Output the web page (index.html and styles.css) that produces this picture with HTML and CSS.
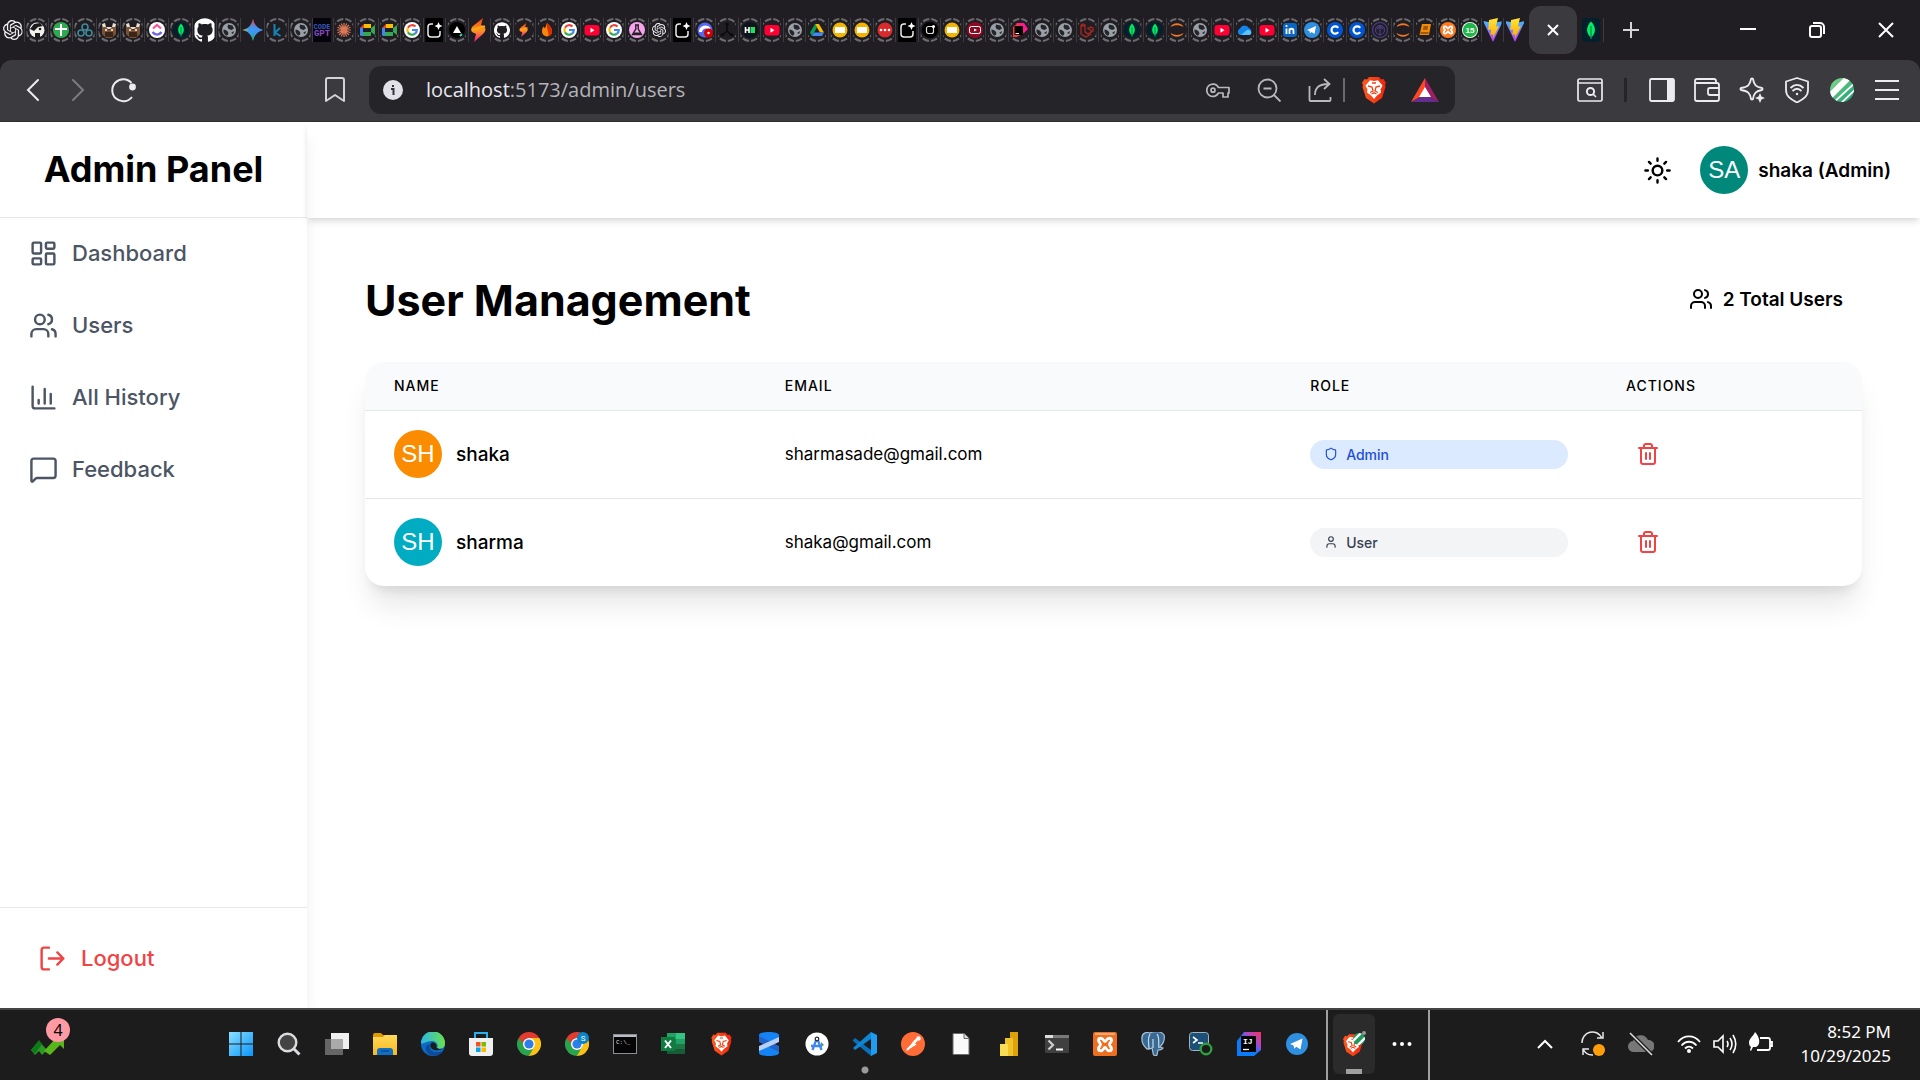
FILE: index.html
```html
<!DOCTYPE html>
<html lang="en">
<head>
<meta charset="utf-8">
<meta name="viewport" content="width=device-width, initial-scale=1">
<title>Admin Panel</title>
<link rel="stylesheet" href="styles.css">
</head>
<body>
<svg class="sprite" aria-hidden="true">
  <defs>
    <linearGradient id="gem" x1="0" x2="1"><stop offset="0" stop-color="#f5c518"/><stop offset=".3" stop-color="#34a0f0"/><stop offset="1" stop-color="#4a8cf7"/></linearGradient>
    <linearGradient id="gemv" x1="0" y1="0" x2="0" y2="1"><stop offset=".1" stop-color="#f0473a"/><stop offset=".5" stop-color="#4a8cf7" stop-opacity="0"/><stop offset=".55" stop-color="#4a8cf7" stop-opacity="0"/><stop offset=".9" stop-color="#20b053"/></linearGradient>
    <linearGradient id="hot" x1="0" y1="0" x2="0" y2="1"><stop offset="0" stop-color="#f23a18"/><stop offset=".5" stop-color="#ff9a1a"/><stop offset="1" stop-color="#f0188c"/></linearGradient>
    <linearGradient id="vblue" x1="0" y1="0" x2="0" y2="1"><stop offset="0" stop-color="#41b8ff"/><stop offset="1" stop-color="#c035ff"/></linearGradient>
    <linearGradient id="vyel" x1="0" y1="0" x2="0" y2="1"><stop offset="0" stop-color="#ffe53b"/><stop offset="1" stop-color="#ffa800"/></linearGradient>
    <linearGradient id="win" x1="0" y1="0" x2="1" y2="1"><stop offset="0" stop-color="#8be0ff"/><stop offset="1" stop-color="#0a94fb"/></linearGradient>
    <linearGradient id="fold" x1="0" y1="0" x2="0" y2="1"><stop offset="0" stop-color="#ffd95a"/><stop offset="1" stop-color="#f7b81d"/></linearGradient>
    <linearGradient id="edge" x1="0" y1="0" x2="1" y2="0"><stop offset="0" stop-color="#2bb5ea"/><stop offset="1" stop-color="#6be04b"/></linearGradient>
    <linearGradient id="brv" x1="0" x2="1"><stop offset="0" stop-color="#ff5a1f"/><stop offset="1" stop-color="#f0250c"/></linearGradient>
    <linearGradient id="jb" x1="0" y1="1" x2="1" y2="0"><stop offset="0" stop-color="#087cfa"/><stop offset=".5" stop-color="#087cfa"/><stop offset=".65" stop-color="#a04ad0"/><stop offset="1" stop-color="#fe315d"/></linearGradient>
    <linearGradient id="green" x1="0" y1="0" x2="1" y2="1"><stop offset="0" stop-color="#8fd98c"/><stop offset="1" stop-color="#0a9a72"/></linearGradient>
  </defs>
  <symbol id="ring" viewBox="0 0 24 24"><circle cx="12" cy="12" r="11" fill="none" stroke="#6c6c70" stroke-width="2" stroke-dasharray="6.6 2.04" stroke-dashoffset="-1"/></symbol>
  <symbol id="gpt" viewBox="0 0 24 24"><path fill="#f4f4f5" d="M22.2819 9.8211a5.9847 5.9847 0 0 0-.5157-4.9108 6.0462 6.0462 0 0 0-6.5098-2.9A6.0651 6.0651 0 0 0 4.9807 4.1818a5.9847 5.9847 0 0 0-3.9977 2.9 6.0462 6.0462 0 0 0 .7427 7.0966 5.98 5.98 0 0 0 .511 4.9107 6.051 6.051 0 0 0 6.5146 2.9001A5.9847 5.9847 0 0 0 13.2599 24a6.0557 6.0557 0 0 0 5.7718-4.2058 5.9894 5.9894 0 0 0 3.9977-2.9001 6.0557 6.0557 0 0 0-.7475-7.0729zm-9.022 12.6081a4.4755 4.4755 0 0 1-2.8764-1.0408l.1419-.0804 4.7783-2.7582a.7948.7948 0 0 0 .3927-.6813v-6.7369l2.02 1.1686a.071.071 0 0 1 .038.052v5.5826a4.504 4.504 0 0 1-4.4945 4.4944zm-9.6607-4.1254a4.4708 4.4708 0 0 1-.5346-3.0137l.142.0852 4.783 2.7582a.7712.7712 0 0 0 .7806 0l5.8428-3.3685v2.3324a.0804.0804 0 0 1-.0332.0615L9.74 19.9502a4.4992 4.4992 0 0 1-6.1408-1.6464zM2.3408 7.8956a4.485 4.485 0 0 1 2.3655-1.9728V11.6a.7664.7664 0 0 0 .3879.6765l5.8144 3.3543-2.0201 1.1685a.0757.0757 0 0 1-.071 0l-4.8303-2.7865A4.504 4.504 0 0 1 2.3408 7.872zm16.5963 3.8558L13.1038 8.364 15.1192 7.2a.0757.0757 0 0 1 .071 0l4.8303 2.7913a4.4944 4.4944 0 0 1-.6765 8.1042v-5.6772a.79.79 0 0 0-.407-.667zm2.0107-3.0231l-.142-.0852-4.7735-2.7818a.7759.7759 0 0 0-.7854 0L9.409 9.2297V6.8974a.0662.0662 0 0 1 .0284-.0615l4.8303-2.7866a4.4992 4.4992 0 0 1 6.6802 4.66zM8.3065 12.863l-2.02-1.1638a.0804.0804 0 0 1-.038-.0567V6.0742a4.4992 4.4992 0 0 1 7.3757-3.4537l-.142.0805L8.704 5.459a.7948.7948 0 0 0-.3927.6813zm1.0976-2.3654l2.602-1.4998 2.6069 1.4998v2.9994l-2.5974 1.4997-2.6067-1.4997Z"/></symbol>
  <symbol id="github" viewBox="0 0 24 24"><path fill="#fff" d="M12 .297c-6.63 0-12 5.373-12 12 0 5.303 3.438 9.8 8.205 11.385.6.113.82-.258.82-.577 0-.285-.01-1.04-.015-2.04-3.338.724-4.042-1.61-4.042-1.61C4.422 18.07 3.633 17.7 3.633 17.7c-1.087-.744.084-.729.084-.729 1.205.084 1.838 1.236 1.838 1.236 1.07 1.835 2.809 1.305 3.495.998.108-.776.417-1.305.76-1.605-2.665-.3-5.466-1.332-5.466-5.93 0-1.31.465-2.38 1.235-3.22-.135-.303-.54-1.523.105-3.176 0 0 1.005-.322 3.3 1.23.96-.267 1.98-.399 3-.405 1.02.006 2.04.138 3 .405 2.28-1.552 3.285-1.23 3.285-1.23.645 1.653.24 2.873.12 3.176.765.84 1.23 1.91 1.23 3.22 0 4.61-2.805 5.625-5.475 5.92.42.36.81 1.096.81 2.22 0 1.606-.015 2.896-.015 3.286 0 .315.21.69.825.57C20.565 22.092 24 17.592 24 12.297c0-6.627-5.373-12-12-12"/></symbol>
  <symbol id="github-s" viewBox="0 0 24 24"><use href="#github" x="4" y="4" width="16" height="16"/></symbol>
  <symbol id="gpt-s" viewBox="0 0 24 24"><use href="#gpt" x="5" y="5" width="14" height="14"/></symbol>
  <symbol id="husky" viewBox="0 0 24 24"><circle cx="12" cy="12" r="7.5" fill="#f3f1ee"/><path d="M5 11l4-5 6-1 3 3-5 1-4 4zM10 15h5v5h-5z" fill="#1c1a1a"/><circle cx="15" cy="11" r="1.3" fill="#1c1a1a"/></symbol>
  <symbol id="sheet" viewBox="0 0 24 24"><circle cx="12" cy="12" r="8" fill="#2ea94f"/><path d="M12 6v12M6 11h12" stroke="#fff" stroke-width="2"/></symbol>
  <symbol id="loops" viewBox="0 0 24 24"><g fill="none" stroke="#3f8a9c" stroke-width="1.6"><circle cx="12" cy="9" r="3"/><circle cx="8" cy="15" r="3"/><circle cx="16" cy="15" r="3"/></g></symbol>
  <symbol id="bear" viewBox="0 0 24 24"><path d="M5 6l3-1 1 4h6l1-4 3 1-1 5H6z" fill="#e8dfd2"/><path d="M5 9h4l3 3 3-3h4v7l-4 4H9l-4-4z" fill="#7a5236"/><path d="M8 14h8v5H8z" fill="#3a251a"/><circle cx="9" cy="12" r="1" fill="#fff"/><circle cx="15" cy="12" r="1" fill="#fff"/></symbol>
  <symbol id="clickup" viewBox="0 0 24 24"><circle cx="12" cy="12" r="8" fill="#fff"/><path d="M8 10.500l4-3.500 4 3.500" fill="none" stroke="#f5539a" stroke-width="2.200"/><path d="M7.500 14c2.500 3.500 6.500 3.500 9 0" fill="none" stroke="#6a63f0" stroke-width="2.300"/></symbol>
  <symbol id="mongo" viewBox="0 0 24 24"><circle cx="12" cy="12" r="8" fill="#04202c"/><path d="M12 5.500c4 4.500 3.500 9 0 12-3.500-3-4-7.500 0-12z" fill="#00ed64"/><path d="M12 9v10" stroke="#0a8a45"/></symbol>
  <symbol id="mongo-l" viewBox="0 0 24 24"><rect x="3" width="18" height="24" rx="4" fill="#04202c"/><path d="M12 3.500c5.500 5.500 5 12 0 16-5-4-5.500-10.500 0-16z" fill="#00ed64"/><path d="M12 8v13" stroke="#0a8a45" stroke-width="1.300"/></symbol>
  <symbol id="globe" viewBox="0 0 24 24"><circle cx="12" cy="12" r="7" fill="#9aa0a8"/><path d="M6.500 11.500c2 .3 3.500 1 4.500 2.500s0 3.500-1.500 3.700C7 16.500 6 14 6.500 11.500zM11 6.500l4.500 1 1.500 3-2.500 1.500-3-1-1-2zM14 15l3-2-.8 3z" fill="#26252a"/></symbol>
  <symbol id="gemini" viewBox="0 0 24 24"><path d="M12 1c1 6 5 10 11 11-6 1-10 5-11 11-1-6-5-10-11-11 6-1 10-5 11-11z" fill="url(#gem)"/><path d="M12 1c1 6 5 10 11 11-6 1-10 5-11 11-1-6-5-10-11-11 6-1 10-5 11-11z" fill="url(#gemv)"/></symbol>
  <symbol id="kag" viewBox="0 0 24 24"><path d="M9.500 6v12M15 10l-5 4.500 5.500 3.500" fill="none" stroke="#1486b4" stroke-width="2"/></symbol>
  <symbol id="claude" viewBox="0 0 24 24"><path d="M12 5v14M5 12h14M7 7l10 10M17 7L7 17M9.300 5.500l5.400 13M14.700 5.500l-5.400 13M5.500 9.300l13 5.400M5.500 14.700l13-5.400" stroke="#d97757" stroke-width="1.200"/></symbol>
  <symbol id="meet" viewBox="0 0 24 24"><path d="M5 10l4-4v4z" fill="#ea4335"/><path d="M9 6h7v4H9z" fill="#fbbc04"/><path d="M5 10h3v8H6l-1-1z" fill="#4285f4"/><path d="M8 14h8v4H8zM16 10l4-3v10l-4-3z" fill="#34a853"/></symbol>
  <symbol id="google" viewBox="0 0 24 24"><circle cx="12" cy="12" r="8" fill="#fff"/><g fill="none" stroke-width="2.200"><path d="M15.500 8.600A4.700 4.700 0 0 0 8 9.700" stroke="#ea4335"/><path d="M8 9.700a4.700 4.700 0 0 0 0 4.700" stroke="#fbbc04"/><path d="M8 14.400a4.700 4.700 0 0 0 7 1.300" stroke="#34a853"/><path d="M12 12h4.800a4.600 4.600 0 0 1-1.800 3.700" stroke="#4285f4"/></g></symbol>
  <symbol id="spark" viewBox="0 0 24 24"><path d="M3 0h18v24H3z" fill="#000"/><path d="M11 6H9a3 3 0 0 0-3 3v7a3 3 0 0 0 3 3h6a3 3 0 0 0 3-3v-3" fill="none" stroke="#ededed" stroke-width="1.500"/><path d="M16.500 4l1.200 2.800 2.800 1.200-2.800 1.200-1.200 2.800-1.200-2.800L12.500 8l2.800-1.200z" fill="#fff"/></symbol>
  <symbol id="spark-s" viewBox="0 0 24 24"><circle cx="12" cy="12" r="8" fill="#000"/><rect x="8.500" y="8.500" width="7" height="7" rx="2" fill="none" stroke="#ddd" stroke-width="1.200"/><circle cx="15.500" cy="8.500" r="1.500" fill="#fff"/></symbol>
  <symbol id="vercel" viewBox="0 0 24 24"><circle cx="12" cy="12" r="8" fill="#000"/><path d="M12 8l4 7H8z" fill="#fff"/><path d="M15 18l2-2" stroke="#35d6c0" stroke-width="2"/></symbol>
  <symbol id="scribe" viewBox="0 0 24 24"><path d="M16 0L6 8c-3 3-2 6 1 7l2 1-2 8 9-8c4-4 3-8-2-9z" fill="url(#hot)"/><path d="M5 12l13-4" stroke="#ffb01a" stroke-width="1.500"/></symbol>
  <symbol id="scribe-s" viewBox="0 0 24 24"><use href="#scribe" x="5" y="5" width="14" height="14"/></symbol>
  <symbol id="fire" viewBox="0 0 24 24"><path d="M12 5c3 3 5 5 5 8.500a5 5 0 0 1-10 0c0-2 .5-3.500 1.500-5l1.500 2z" fill="#f8860b"/><path d="M12 5c3 3 5 5 5 8.500a5 5 0 0 1-4 4.800c2-4-2-6-1-13.300z" fill="#dd2c00"/></symbol>
  <symbol id="youtube" viewBox="0 0 24 24"><rect x="4.500" y="7" width="15" height="10.500" rx="3" fill="#ff0033"/><path d="M10.500 9.700l4 2.500-4 2.500z" fill="#fff"/></symbol>
  <symbol id="labs" viewBox="0 0 24 24"><circle cx="12" cy="12" r="8" fill="#f5a3ec"/><path d="M10 7h4M10.800 7v4L7.500 16.500h9L13.200 11V7" fill="none" stroke="#222" stroke-width="1.400"/><path d="M9 14.500h6l1.500 2.500h-9z" fill="#222"/></symbol>
  <symbol id="copilot" viewBox="0 0 24 24"><circle cx="12" cy="12" r="7.500" fill="#5468f0"/><path d="M7.500 14a5 5 0 0 1 9-3" stroke="#fff" stroke-width="3" fill="none"/><circle cx="15.500" cy="15" r="4.500" fill="#d50000"/><circle cx="15.500" cy="15" r="1.200" fill="#fff"/></symbol>
  <symbol id="tri" viewBox="0 0 24 24"><path d="M12 6v7l-5 4.500M12 13l5 4.500" stroke="#0a0a0c" stroke-width="1.600" fill="none"/><circle cx="12" cy="6" r="1.600" fill="#0a0a0c"/><circle cx="7" cy="17" r="1.600" fill="#0a0a0c"/><circle cx="17" cy="17" r="1.600" fill="#0a0a0c"/></symbol>
  <symbol id="hrank" viewBox="0 0 24 24"><circle cx="12" cy="12" r="8" fill="#0d141e"/><path d="M7.500 9v6M11 9v6M7.500 12H11" stroke="#fff" stroke-width="1.600"/><path d="M12.500 9H17v6h-4.500z" fill="#1ee05a"/></symbol>
  <symbol id="drive" viewBox="0 0 24 24"><path d="M10 6h4l5 8.500h-4z" fill="#fbbc04"/><path d="M10 6L5 14.500 7 18l5-8.500z" fill="#0f9d58"/><path d="M9 14.500h10L17 18H7z" fill="#4285f4"/></symbol>
  <symbol id="slides" viewBox="0 0 24 24"><circle cx="12" cy="12" r="7.500" fill="#f5b400"/><rect x="7" y="9" width="10" height="6" fill="#fff"/></symbol>
  <symbol id="dots" viewBox="0 0 24 24"><circle cx="12" cy="12" r="7.500" fill="#d92b2b"/><g fill="#fff"><circle cx="8" cy="12" r="1.300"/><circle cx="12" cy="12" r="1.300"/><circle cx="16" cy="12" r="1.300"/></g></symbol>
  <symbol id="ytd" viewBox="0 0 24 24"><circle cx="12" cy="12" r="8" fill="#8c0b22"/><rect x="6.500" y="8.500" width="11" height="7" rx="2" fill="none" stroke="#fff"/><path d="M11 10.500l3 1.500-3 1.500z" fill="#fff"/></symbol>
  <symbol id="jet" viewBox="0 0 24 24"><path d="M8 5h8l4 6-4 4z" fill="#ff1a8c"/><path d="M5 9l5-4 6 10-7 4H5z" fill="#fc3a3a"/><path d="M6.500 8H15v9H6.500z" fill="#000"/><path d="M7.500 15.500H11" stroke="#fff"/></symbol>
  <symbol id="laravel" viewBox="0 0 24 24"><path d="M6 7l2-1 2 1v7l3 2 5-3v-3l-2-1-3 1.500 3 1.500v3M6 7v9l5 3 5-3M6 7l2 1.200 2-1.200" fill="none" stroke="#b5281e" stroke-width="1.200"/></symbol>
  <symbol id="jupyter" viewBox="0 0 24 24"><path d="M5.500 9c2-5 11-5 13 0-4-2.500-9-2.500-13 0zM5.500 15c2 5 11 5 13 0-4 2.500-9 2.500-13 0z" fill="#f37726"/></symbol>
  <symbol id="onedrive" viewBox="0 0 24 24"><path d="M7 17a3.500 3.500 0 0 1 0-6.500A5 5 0 0 1 16 10a4 4 0 0 1 .5 7z" fill="#1484e8"/><path d="M8 17l6-5c4-1 6 4 2.500 5z" fill="#5ac4fa"/></symbol>
  <symbol id="linkedin" viewBox="0 0 24 24"><rect x="5" y="5" width="14" height="14" rx="3" fill="#0a66c2"/><path d="M8.500 10.500V16M11.500 16v-5.500M11.500 13c0-3 4-3 4 0v3" stroke="#fff" stroke-width="1.800" fill="none"/><circle cx="8.500" cy="8" r="1.100" fill="#fff"/></symbol>
  <symbol id="telegram" viewBox="0 0 24 24"><circle cx="12" cy="12" r="8" fill="#2f8fe0"/><path d="M7 12l9-4-1.500 8-3-2-1.500 1.500-.5-2.500z" fill="#fff"/></symbol>
  <symbol id="course" viewBox="0 0 24 24"><circle cx="12" cy="12" r="8" fill="#0056d2"/><path d="M15.200 9.800a3.700 3.700 0 1 0 0 4.400" fill="none" stroke="#fff" stroke-width="2.200"/></symbol>
  <symbol id="purple" viewBox="0 0 24 24"><g fill="none" stroke="#4a3f86" stroke-width="1.200"><circle cx="12" cy="12" r="7.500"/><circle cx="12" cy="12" r="4.500"/><path d="M12 8v10M9 11l3-3 3 3"/></g></symbol>
  <symbol id="book" viewBox="0 0 24 24"><path d="M9 6h9l-2 11H6.500z" fill="#f58a07"/><path d="M10.500 9h4.500M10 11h4.500M7.500 15h8" stroke="#4a2a05" stroke-width="1.100"/></symbol>
  <symbol id="xampp" viewBox="0 0 24 24"><circle cx="12" cy="12" r="8" fill="#fb7a24"/><path d="M8 8.500c3-1 3 2 4 2s1-3 4-2c1.500 2-1 2.500-1 3.500s2.500 1.500 1 3.500c-3 1-3-2-4-2s-1 3-4 2c-1.500-2 1-2.500 1-3.500S6.500 10.500 8 8.500z" fill="none" stroke="#fff" stroke-width="1.800"/></symbol>
  <symbol id="vite" viewBox="0 0 24 24"><path d="M2 3l10 21L22 3l-9 2z" fill="url(#vblue)"/><path d="M17 0L8 2l-.8 10 3-.5-1 5.500 3-.8-.5 4.500L18 8l-3 .5z" fill="url(#vyel)"/></symbol>

  <symbol id="brave" viewBox="0 0 24 28"><path d="M7 1h10l2 2.500 2.500-.5L24 7l-1 2 .5 2-3.500 11-8 5.500L4 22 .5 11 1 9 0 7l2.500-4L5 3.500z" fill="url(#brv)"/><path d="M12 5l4-.8 4.500 5.300-2 4 .5 3-4 3-3 3.500L9 19.500l-4-3 .5-3-2-4L8 4.200z" fill="#fff"/><path d="M6 10l4 1 1 4-3 1.500M18 10l-4 1-1 4 3 1.500M9.500 18l2.500-1.200L14.500 18M10 7h4" fill="none" stroke="#f24012" stroke-width="1.300"/></symbol>
  <symbol id="chrome" viewBox="0 0 24 24"><path d="M12 12l10.400-6A12 12 0 0 1 12 24z" fill="#fbc116"/><path d="M12 6h10.400L17 15z" fill="#fbc116"/><path d="M12 12l5 3-5 9A12 12 0 0 1 1.600 6z" fill="#2ba24c"/><path d="M1.600 6A12 12 0 0 1 22.400 6H12a6 6 0 0 0-5.200 3l-1 2z" fill="#e33b2e"/><circle cx="12" cy="12" r="6" fill="#fff"/><circle cx="12" cy="12" r="4.600" fill="#2f7de9"/></symbol>
  <symbol id="users" viewBox="0 0 24 24"><path d="M16 21v-2a4 4 0 0 0-4-4H6a4 4 0 0 0-4 4v2"/><circle cx="9" cy="7" r="4"/><path d="M22 21v-2a4 4 0 0 0-3-3.870M16 3.130a4 4 0 0 1 0 7.750"/></symbol>
  <symbol id="trash" viewBox="0 0 24 24"><path d="M3 6h18M19 6v14a2 2 0 0 1-2 2H7a2 2 0 0 1-2-2V6M8 6V4a2 2 0 0 1 2-2h4a2 2 0 0 1 2 2v2M10 11v6M14 11v6"/></symbol>
</svg>

<header class="tabstrip">
  <div class="tabs pinned">
    <button class="tab" aria-label="Tab"><svg class="fav" viewBox="0 0 24 24"><use href="#gpt" x="2" y="2" width="20" height="20"/></svg></button>
    <button class="tab" aria-label="Tab"><svg class="fav" viewBox="0 0 24 24"><use href="#ring"/><use href="#husky"/></svg></button>
    <button class="tab" aria-label="Tab"><svg class="fav" viewBox="0 0 24 24"><use href="#ring"/><use href="#sheet"/></svg></button>
    <button class="tab" aria-label="Tab"><svg class="fav" viewBox="0 0 24 24"><use href="#ring"/><use href="#loops"/></svg></button>
    <button class="tab" aria-label="Tab"><svg class="fav" viewBox="0 0 24 24"><use href="#ring"/><use href="#bear"/></svg></button>
    <button class="tab" aria-label="Tab"><svg class="fav" viewBox="0 0 24 24"><use href="#ring"/><use href="#bear"/></svg></button>
    <button class="tab" aria-label="Tab"><svg class="fav" viewBox="0 0 24 24"><use href="#ring"/><use href="#clickup"/></svg></button>
    <button class="tab" aria-label="Tab"><svg class="fav" viewBox="0 0 24 24"><use href="#ring"/><use href="#mongo"/></svg></button>
    <button class="tab" aria-label="Tab"><svg class="fav" viewBox="0 0 24 24"><use href="#github"/></svg></button>
    <button class="tab" aria-label="Tab"><svg class="fav" viewBox="0 0 24 24"><use href="#ring"/><use href="#globe"/></svg></button>
    <button class="tab" aria-label="Tab"><svg class="fav" viewBox="0 0 24 24"><use href="#gemini"/></svg></button>
    <button class="tab" aria-label="Tab"><svg class="fav" viewBox="0 0 24 24"><use href="#ring"/><use href="#kag"/></svg></button>
    <button class="tab" aria-label="Tab"><svg class="fav" viewBox="0 0 24 24"><use href="#ring"/><use href="#globe"/></svg></button>
  </div>
  <div class="tabs open">
    <button class="tab" aria-label="Tab"><svg class="fav" viewBox="0 0 24 24"><path d="M3 0h18v24H3z" fill="#05040c"/><text x="12" y="11" font-family="Liberation Mono" font-weight="700" font-size="7" fill="#3b58c0" text-anchor="middle">CODE</text><text x="12" y="18" font-family="Liberation Mono" font-weight="700" font-size="9" fill="#8a4ac0" text-anchor="middle">GPT</text></svg></button>
    <button class="tab" aria-label="Tab"><svg class="fav" viewBox="0 0 24 24"><use href="#ring"/><use href="#claude"/></svg></button>
    <button class="tab" aria-label="Tab"><svg class="fav" viewBox="0 0 24 24"><use href="#ring"/><use href="#meet"/></svg></button>
    <button class="tab" aria-label="Tab"><svg class="fav" viewBox="0 0 24 24"><use href="#ring"/><use href="#meet"/></svg></button>
    <button class="tab" aria-label="Tab"><svg class="fav" viewBox="0 0 24 24"><use href="#ring"/><use href="#google"/></svg></button>
    <button class="tab" aria-label="Tab"><svg class="fav" viewBox="0 0 24 24"><use href="#spark"/></svg></button>
    <button class="tab" aria-label="Tab"><svg class="fav" viewBox="0 0 24 24"><use href="#ring"/><use href="#vercel"/></svg></button>
    <button class="tab" aria-label="Tab"><svg class="fav" viewBox="0 0 24 24"><use href="#scribe"/></svg></button>
    <button class="tab" aria-label="Tab"><svg class="fav" viewBox="0 0 24 24"><use href="#ring"/><use href="#github-s"/></svg></button>
    <button class="tab" aria-label="Tab"><svg class="fav" viewBox="0 0 24 24"><use href="#ring"/><use href="#scribe-s"/></svg></button>
    <button class="tab" aria-label="Tab"><svg class="fav" viewBox="0 0 24 24"><use href="#ring"/><use href="#fire"/></svg></button>
    <button class="tab" aria-label="Tab"><svg class="fav" viewBox="0 0 24 24"><use href="#ring"/><use href="#google"/></svg></button>
    <button class="tab" aria-label="Tab"><svg class="fav" viewBox="0 0 24 24"><use href="#ring"/><use href="#youtube"/></svg></button>
    <button class="tab" aria-label="Tab"><svg class="fav" viewBox="0 0 24 24"><use href="#ring"/><use href="#google"/></svg></button>
    <button class="tab" aria-label="Tab"><svg class="fav" viewBox="0 0 24 24"><use href="#ring"/><use href="#labs"/></svg></button>
    <button class="tab" aria-label="Tab"><svg class="fav" viewBox="0 0 24 24"><use href="#ring"/><use href="#gpt-s"/></svg></button>
    <button class="tab" aria-label="Tab"><svg class="fav" viewBox="0 0 24 24"><use href="#spark"/></svg></button>
    <button class="tab" aria-label="Tab"><svg class="fav" viewBox="0 0 24 24"><use href="#ring"/><use href="#copilot"/></svg></button>
    <button class="tab" aria-label="Tab"><svg class="fav" viewBox="0 0 24 24"><use href="#ring"/><use href="#tri"/></svg></button>
    <button class="tab" aria-label="Tab"><svg class="fav" viewBox="0 0 24 24"><use href="#ring"/><use href="#hrank"/></svg></button>
    <button class="tab" aria-label="Tab"><svg class="fav" viewBox="0 0 24 24"><use href="#ring"/><use href="#youtube"/></svg></button>
    <button class="tab" aria-label="Tab"><svg class="fav" viewBox="0 0 24 24"><use href="#ring"/><use href="#globe"/></svg></button>
    <button class="tab" aria-label="Tab"><svg class="fav" viewBox="0 0 24 24"><use href="#ring"/><use href="#drive"/></svg></button>
    <button class="tab" aria-label="Tab"><svg class="fav" viewBox="0 0 24 24"><use href="#ring"/><use href="#slides"/></svg></button>
    <button class="tab" aria-label="Tab"><svg class="fav" viewBox="0 0 24 24"><use href="#ring"/><use href="#slides"/></svg></button>
    <button class="tab" aria-label="Tab"><svg class="fav" viewBox="0 0 24 24"><use href="#ring"/><use href="#dots"/></svg></button>
    <button class="tab" aria-label="Tab"><svg class="fav" viewBox="0 0 24 24"><use href="#spark"/></svg></button>
    <button class="tab" aria-label="Tab"><svg class="fav" viewBox="0 0 24 24"><use href="#ring"/><use href="#spark-s"/></svg></button>
    <button class="tab" aria-label="Tab"><svg class="fav" viewBox="0 0 24 24"><use href="#ring"/><use href="#slides"/></svg></button>
    <button class="tab" aria-label="Tab"><svg class="fav" viewBox="0 0 24 24"><use href="#ring"/><use href="#ytd"/></svg></button>
    <button class="tab" aria-label="Tab"><svg class="fav" viewBox="0 0 24 24"><use href="#ring"/><use href="#globe"/></svg></button>
    <button class="tab" aria-label="Tab"><svg class="fav" viewBox="0 0 24 24"><use href="#ring"/><use href="#jet"/></svg></button>
    <button class="tab" aria-label="Tab"><svg class="fav" viewBox="0 0 24 24"><use href="#ring"/><use href="#globe"/></svg></button>
    <button class="tab" aria-label="Tab"><svg class="fav" viewBox="0 0 24 24"><use href="#ring"/><use href="#globe"/></svg></button>
    <button class="tab" aria-label="Tab"><svg class="fav" viewBox="0 0 24 24"><use href="#ring"/><use href="#laravel"/></svg></button>
    <button class="tab" aria-label="Tab"><svg class="fav" viewBox="0 0 24 24"><use href="#ring"/><use href="#globe"/></svg></button>
    <button class="tab" aria-label="Tab"><svg class="fav" viewBox="0 0 24 24"><use href="#ring"/><use href="#mongo"/></svg></button>
    <button class="tab" aria-label="Tab"><svg class="fav" viewBox="0 0 24 24"><use href="#ring"/><use href="#mongo"/></svg></button>
    <button class="tab" aria-label="Tab"><svg class="fav" viewBox="0 0 24 24"><use href="#ring"/><use href="#jupyter"/></svg></button>
    <button class="tab" aria-label="Tab"><svg class="fav" viewBox="0 0 24 24"><use href="#ring"/><use href="#globe"/></svg></button>
    <button class="tab" aria-label="Tab"><svg class="fav" viewBox="0 0 24 24"><use href="#ring"/><use href="#youtube"/></svg></button>
    <button class="tab" aria-label="Tab"><svg class="fav" viewBox="0 0 24 24"><use href="#ring"/><use href="#onedrive"/></svg></button>
    <button class="tab" aria-label="Tab"><svg class="fav" viewBox="0 0 24 24"><use href="#ring"/><use href="#youtube"/></svg></button>
    <button class="tab" aria-label="Tab"><svg class="fav" viewBox="0 0 24 24"><use href="#ring"/><use href="#linkedin"/></svg></button>
    <button class="tab" aria-label="Tab"><svg class="fav" viewBox="0 0 24 24"><use href="#ring"/><use href="#telegram"/></svg></button>
    <button class="tab" aria-label="Tab"><svg class="fav" viewBox="0 0 24 24"><use href="#ring"/><use href="#course"/></svg></button>
    <button class="tab" aria-label="Tab"><svg class="fav" viewBox="0 0 24 24"><use href="#ring"/><use href="#course"/></svg></button>
    <button class="tab" aria-label="Tab"><svg class="fav" viewBox="0 0 24 24"><use href="#ring"/><use href="#purple"/></svg></button>
    <button class="tab" aria-label="Tab"><svg class="fav" viewBox="0 0 24 24"><use href="#ring"/><use href="#jupyter"/></svg></button>
    <button class="tab" aria-label="Tab"><svg class="fav" viewBox="0 0 24 24"><use href="#ring"/><use href="#book"/></svg></button>
    <button class="tab" aria-label="Tab"><svg class="fav" viewBox="0 0 24 24"><use href="#ring"/><use href="#xampp"/></svg></button>
    <button class="tab" aria-label="Tab"><svg class="fav" viewBox="0 0 24 24"><use href="#ring"/><circle cx="12" cy="12" r="8" fill="#fff"/><circle cx="12" cy="12" r="7.200" fill="#1fb848"/><text x="12" y="15" font-family="Liberation Sans" font-weight="700" font-size="8" fill="#fff" text-anchor="middle">15</text></svg></button>
    <button class="tab" aria-label="Tab"><svg class="fav" viewBox="0 0 24 24"><use href="#vite"/></svg></button>
    <button class="tab last" aria-label="Tab"><svg class="fav" viewBox="0 0 24 24"><use href="#vite"/></svg></button>
  </div>
  <button class="tab-active" aria-label="Close tab"><svg width="14" height="14" viewBox="0 0 14 14"><path d="M2 2l10 10M12 2L2 12" stroke="#fff" stroke-width="2"/></svg></button>
  <button class="tab tab-end" aria-label="Tab"><svg class="fav" viewBox="0 0 24 24"><use href="#mongo-l"/></svg></button>
  <button class="new-tab" aria-label="New tab"><svg width="18" height="18" viewBox="0 0 18 18"><path d="M9 1v16M1 9h16" stroke="#d4d3d8" stroke-width="2"/></svg></button>
  <div class="win-controls">
    <button aria-label="Minimize"><svg width="18" height="18" viewBox="0 0 18 18"><path d="M1 8h16" stroke="#fff" stroke-width="2"/></svg></button>
    <button aria-label="Restore"><svg width="18" height="18" viewBox="0 0 18 18" fill="none" stroke="#fff" stroke-width="2"><rect x="2" y="5" width="11" height="11" rx="2"/><path d="M5 2h7a4 4 0 0 1 4 4v7"/></svg></button>
    <button aria-label="Close window"><svg width="18" height="18" viewBox="0 0 18 18"><path d="M2 2l14 14M16 2L2 16" stroke="#fff" stroke-width="2"/></svg></button>
  </div>
</header>

<div class="toolbar-wrap">
<nav class="toolbar">
  <div class="nav-left">
    <button class="tool" aria-label="Back"><svg width="26" height="26" viewBox="0 0 26 26"><path d="M18 3L8 13l10 10" fill="none" stroke="#ececf0" stroke-width="2" stroke-linecap="round"/></svg></button>
    <button class="tool" aria-label="Forward"><svg width="26" height="26" viewBox="0 0 26 26"><path d="M8 3l10 10L8 23" fill="none" stroke="#7c7b80" stroke-width="2" stroke-linecap="round"/></svg></button>
    <button class="tool" aria-label="Reload"><svg width="26" height="26" viewBox="0 0 26 26"><path d="M21.500 6a11 11 0 1 0 .5 14" fill="none" stroke="#ececf0" stroke-width="2"/><circle cx="22.500" cy="10" r="3.400" fill="#ececf0"/></svg></button>
    <button class="tool bookmark" aria-label="Bookmark"><svg width="26" height="26" viewBox="0 0 26 26"><path d="M6 1h14q2 0 2 2v21l-9-6-9 6V3q0-2 2-2z" fill="none" stroke="#d4d3d8" stroke-width="2" stroke-linejoin="round"/></svg></button>
  </div>
  <div class="address">
    <svg class="info" width="20" height="20" viewBox="0 0 20 20"><circle cx="10" cy="10" r="10" fill="#e2e1e8"/><path d="M8 9h2.500v6M10 5v2" fill="none" stroke="#34333a" stroke-width="2"/></svg>
    <p class="url">localhost<span>:5173/admin/users</span></p>
    <button class="tool-wide" aria-label="Passwords"><svg width="24" height="24" viewBox="0 0 24 24" fill="none" stroke="#b9b8bd" stroke-width="1.700"><path d="M12.500 9.500A6.200 6.200 0 1 0 12.500 15h4.500v4h5v-4h1V9.500z" stroke-linejoin="round"/><circle cx="7" cy="12.200" r="2"/></svg></button>
    <button class="tool-wide" aria-label="Zoom"><svg width="24" height="24" viewBox="0 0 24 24" fill="none" stroke="#b9b8bd" stroke-width="1.800"><circle cx="10.500" cy="10.500" r="9"/><path d="M6.500 10.500h8M17 17l6.500 6.500"/></svg></button>
    <button class="tool-wide" aria-label="Share"><svg width="24" height="24" viewBox="0 0 24 24" fill="none" stroke="#b9b8bd" stroke-width="1.800"><path d="M1.500 8v14q0 1 1 1h19q1 0 1-1v-3M7 17C7 10 11 6 20 6M16 1l5.500 5L16 11"/></svg></button>
    <i class="rule"></i>
    <button class="tool-wide" aria-label="Brave shields"><svg width="24" height="28" viewBox="0 0 24 28"><use href="#brave"/></svg></button>
    <button class="tool-wide" aria-label="Rewards"><svg width="28" height="24" viewBox="0 0 28 24"><path d="M14 0L0 24l9-5 5-9z" fill="#ff4724"/><path d="M14 0l14 24-9-5-5-9z" fill="#9e1f63"/><path d="M0 24h28l-9-5H9z" fill="#662d91"/><path d="M14 9l6 10H8z" fill="#fff"/></svg></button>
  </div>
  <div class="nav-right">
    <button class="tool" aria-label="Find"><svg width="26" height="26" viewBox="0 0 26 26" fill="none" stroke="#ececf0" stroke-width="1.700"><rect x="1" y="2" width="24" height="22" rx="1.500"/><path d="M1 6h24M16 17l3 3" /><circle cx="13.500" cy="14.500" r="3.600" stroke-width="2"/></svg></button>
    <i class="rule dark"></i>
    <button class="tool" aria-label="Sidebar"><svg width="26" height="26" viewBox="0 0 26 26"><rect x="1" y="2" width="24" height="22" rx="1.500" fill="none" stroke="#ececf0" stroke-width="1.800"/><path d="M18 2h7v22h-7z" fill="#ececf0"/></svg></button>
    <button class="tool" aria-label="Wallet"><svg width="26" height="26" viewBox="0 0 26 26" fill="none" stroke="#ececf0" stroke-width="1.800"><path d="M22 6V4q0-2-2-2H3Q1 2 1 4v18q0 2 2 2h20q2 0 2-2V8q0-2-2-2H1M25 11h-9q-2 0-2 2v3q0 2 2 2h9"/></svg></button>
    <button class="tool" aria-label="Leo"><svg width="26" height="26" viewBox="0 0 26 26"><path d="M12 2q1-1 2 0c1 6 3 8 9 9q1 1 0 2c-6 1-8 3-9 9q-1 1-2 0c-1-6-3-8-10-9q-1-1 0-2c7-1 9-3 10-9z" fill="none" stroke="#ececf0" stroke-width="1.800"/><path d="M21 16l1.500 3.500L26 21l-3.500 1.500L21 26l-1.500-3.500L16 21l3.500-1.500z" fill="#ececf0"/></svg></button>
    <button class="tool" aria-label="VPN"><svg width="26" height="26" viewBox="0 0 26 26" fill="none" stroke="#ececf0" stroke-width="1.800"><path d="M13 1l11 3.500V13c0 6-4 9-11 12.500C6 22 2 19 2 13V4.500z" stroke-linejoin="round"/><path d="M6.500 11c4-4 9-4 13 0M8.500 14c3-3 6-3 9 0"/><circle cx="13" cy="17" r="1.200" fill="#ececf0" stroke="none"/></svg></button>
    <button class="tool" aria-label="Profile"><svg width="26" height="26" viewBox="0 0 26 26"><clipPath id="pc"><circle cx="13" cy="13" r="12"/></clipPath><g clip-path="url(#pc)"><path d="M0 0h26v26H0z" fill="url(#green)"/><path d="M-2 22L22-2" stroke="#fff" stroke-width="6"/><path d="M4 26L28 4M8 30L30 9" stroke="#fff" stroke-width="1.800"/></g></svg></button>
    <button class="tool" aria-label="Menu"><svg width="26" height="26" viewBox="0 0 26 26"><path d="M1 4h24M1 13h24M1 22h24" stroke="#ececf0" stroke-width="2"/></svg></button>
  </div>
</nav>
</div>

<div class="page">
  <aside class="sidebar">
    <h2 class="brand">Admin Panel</h2>
    <nav class="menu">
      <a href="#"><svg class="ico" viewBox="0 0 24 24"><rect x="3" y="3" width="7" height="9" rx="1"/><rect x="14" y="3" width="7" height="5" rx="1"/><rect x="14" y="12" width="7" height="9" rx="1"/><rect x="3" y="16" width="7" height="5" rx="1"/></svg>Dashboard</a>
      <a href="#"><svg class="ico" viewBox="0 0 24 24"><use href="#users"/></svg>Users</a>
      <a href="#"><svg class="ico" viewBox="0 0 24 24"><path d="M3 3v16a2 2 0 0 0 2 2h16M18 17V9M13 17V5M8 17v-3"/></svg>All History</a>
      <a href="#"><svg class="ico" viewBox="0 0 24 24"><path d="M22 17a2 2 0 0 1-2 2H6.828a2 2 0 0 0-1.414.586l-2.202 2.202A.71.71 0 0 1 2 21.286V5a2 2 0 0 1 2-2h16a2 2 0 0 1 2 2z"/></svg>Feedback</a>
    </nav>
    <div class="logout">
      <button><svg class="ico" viewBox="0 0 24 24"><path d="M16 17l5-5-5-5M21 12H9M9 21H5a2 2 0 0 1-2-2V5a2 2 0 0 1 2-2h4"/></svg>Logout</button>
    </div>
  </aside>
  <div class="body">
    <header class="topbar">
      <button class="theme" aria-label="Toggle theme"><svg class="ico" viewBox="0 0 24 24"><circle cx="12" cy="12" r="4"/><path d="M12 2v2M12 20v2M4.930 4.930l1.410 1.410M17.660 17.660l1.410 1.410M2 12h2M20 12h2M6.340 17.660l-1.410 1.410M19.070 4.930l-1.410 1.410"/></svg></button>
      <div class="who"><span class="avatar teal">SA</span><span>shaka (Admin)</span></div>
    </header>
    <main class="content">
      <div class="heading">
        <h1>User Management</h1>
        <p class="count"><svg class="ico small" viewBox="0 0 24 24"><use href="#users"/></svg>2 Total Users</p>
      </div>
      <div class="card">
        <table>
          <colgroup><col class="c-name"><col class="c-email"><col class="c-role"><col></colgroup>
          <thead><tr><th>Name</th><th>Email</th><th>Role</th><th>Actions</th></tr></thead>
          <tbody>
            <tr>
              <td><div class="person"><span class="avatar orange">SH</span>shaka</div></td>
              <td class="email">sharmasade@gmail.com</td>
              <td><div class="badge admin"><svg class="ico tiny" viewBox="0 0 24 24"><path d="M20 13c0 5-3.500 7.500-7.660 8.950a1 1 0 0 1-.67-.01C7.500 20.500 4 18 4 13V6a1 1 0 0 1 1-1c2 0 4.500-1.200 6.240-2.720a1.170 1.170 0 0 1 1.520 0C14.510 3.810 17 5 19 5a1 1 0 0 1 1 1z"/></svg>Admin</div></td>
              <td><button class="delete" aria-label="Delete shaka"><svg class="ico small" viewBox="0 0 24 24"><use href="#trash"/></svg></button></td>
            </tr>
            <tr>
              <td><div class="person"><span class="avatar cyan">SH</span>sharma</div></td>
              <td class="email">shaka@gmail.com</td>
              <td><div class="badge user"><svg class="ico tiny" viewBox="0 0 24 24"><path d="M19 21v-2a4 4 0 0 0-4-4H9a4 4 0 0 0-4 4v2"/><circle cx="12" cy="7" r="4"/></svg>User</div></td>
              <td><button class="delete" aria-label="Delete sharma"><svg class="ico small" viewBox="0 0 24 24"><use href="#trash"/></svg></button></td>
            </tr>
          </tbody>
        </table>
      </div>
    </main>
  </div>
</div>

<footer class="taskbar">
  <button class="widget" aria-label="Widgets"><svg width="36" height="22" viewBox="0 0 36 22"><path d="M1 17l8-9 8 9-5 5-3-4-4 4z" fill="#2c9a22"/><path d="M1 17l8-10 3 4-7 10z" fill="#0f7a1c"/><path d="M14 18L25 6l-4-4h13v14l-4-4-10 10z" fill="#58b51a"/></svg><span class="badge-count">4</span></button>
  <div class="apps">
    <button class="app" aria-label="Start"><svg width="24" height="24" viewBox="0 0 24 24"><path d="M0 0h11.500v11.500H0zM12.500 0H24v11.500H12.500zM0 12.500h11.500V24H0zM12.500 12.500H24V24H12.500z" fill="url(#win)"/></svg></button>
    <button class="app" aria-label="Search"><svg width="24" height="24" viewBox="0 0 24 24"><circle cx="10.500" cy="10.500" r="8.800" fill="#444" stroke="#dcdce0" stroke-width="2.400"/><path d="M16.500 16.500l6 6" stroke="#dcdce0" stroke-width="3"/></svg></button>
    <button class="app" aria-label="Task view"><svg width="24" height="24" viewBox="0 0 24 24"><path d="M0 7h18v16H0z" fill="#666"/><path d="M6 1h18v16H6z" fill="#efefef"/><path d="M6 7h12v10H6z" fill="#aaa"/></svg></button>
    <button class="app" aria-label="File Explorer"><svg width="24" height="24" viewBox="0 0 24 24"><path d="M0 3q0-2 2-2h6l2 2h13v8H0z" fill="#dd9a05"/><path d="M0 5h10l2-2h12v20H0z" fill="url(#fold)"/><path d="M4 23v-4q0-3 3-3h10q3 0 3 3v4z" fill="#0f6fc4"/><path d="M8 19h8" stroke="#0a4a90" stroke-width="1.500"/></svg></button>
    <button class="app" aria-label="Edge"><svg width="24" height="24" viewBox="0 0 24 24"><circle cx="12" cy="12" r="12" fill="#0c6cc4"/><path d="M0 11a12 12 0 0 1 24 .5c0 5-5 6-8 4.500 2-3-1-7-5-7C6 9 0 13 0 11z" fill="url(#edge)"/><path d="M9 13c-2 7 6 9 13 6-4 7-15 6-17-1-1-4 1-6 4-5z" fill="#0d4a9a"/><path d="M9.500 12c-1 5 4 7 8 6 3 0 5-2 5-2-2 2-8 1-7-2 0-3-4-5-6-2z" fill="#1c1c1c"/></svg></button>
    <button class="app" aria-label="Store"><svg width="24" height="24" viewBox="0 0 24 24"><path d="M6 6V1h12v5" fill="none" stroke="#2ab0ea" stroke-width="2"/><path d="M0 6h24v15q0 3-3 3H3q-3 0-3-3z" fill="#f0f0f0"/><path d="M7 10h4.500v4.500H7z" fill="#f25022"/><path d="M12.500 10H17v4.500h-4.500z" fill="#7fba00"/><path d="M7 15.500h4.500V20H7z" fill="#00a4ef"/><path d="M12.500 15.500H17V20h-4.500z" fill="#ffb900"/></svg></button>
    <button class="app" aria-label="Chrome"><svg width="24" height="24" viewBox="0 0 24 24"><use href="#chrome"/></svg></button>
    <button class="app" aria-label="Chrome profile"><svg width="24" height="24" viewBox="0 0 24 24"><use href="#chrome"/><circle cx="18" cy="6" r="6" fill="#0a84c6"/><text x="18" y="9" font-family="Roboto" font-size="8" fill="#fff" text-anchor="middle">S</text></svg></button>
    <button class="app" aria-label="Command Prompt"><svg width="24" height="24" viewBox="0 0 24 24"><rect x=".5" y="2.500" width="23" height="19" fill="#050505" stroke="#8a8f96"/><path d="M1 3h22v2H1z" fill="#b8bdc4"/><text x="3" y="12" font-family="Liberation Mono" font-size="6" fill="#ddd">C:\_</text></svg></button>
    <button class="app" aria-label="Excel"><svg width="24" height="24" viewBox="0 0 24 24"><path d="M6 1h18v21H6z" fill="#1a7a44"/><path d="M6 1h9v6H6z" fill="#21a366"/><path d="M15 1h9v6h-9z" fill="#33c481"/><path d="M15 7h9v5h-9z" fill="#21a366"/><path d="M6 17h18v5H6z" fill="#185c37"/><path d="M0 5h14v14H0z" fill="#107c41"/><path d="M4 8.500l6 7.500M10 8.500L4 16" stroke="#fff" stroke-width="2"/></svg></button>
    <button class="app" aria-label="Brave"><svg width="21" height="24" viewBox="0 0 24 28"><use href="#brave"/></svg></button>
    <button class="app" aria-label="Azure Data"><svg width="24" height="24" viewBox="0 0 24 24"><path d="M2 3c0-4 20-4 20 0v6l-10 3L2 8z" fill="#1484f5"/><path d="M2 21c0 4 20 4 20 0v-5l-10-4-10 4z" fill="#1484f5"/><path d="M2 4l20 10v6L2 10z" fill="#2462c8"/><path d="M22 5v5L2 19v-5z" fill="#b7d2fa"/></svg></button>
    <button class="app" aria-label="Android Studio"><svg width="24" height="24" viewBox="0 0 24 24"><circle cx="12" cy="12" r="11.500" fill="#fff"/><path d="M16 10l3 3-3 2z" fill="#3ba55c"/><path d="M11.500 7L7.500 18M12.500 7l4 11M6 14h11" stroke="#4285f4" stroke-width="2.300"/><circle cx="12" cy="7" r="1.800" fill="#fff" stroke="#2b2f36" stroke-width="1.300"/></svg></button>
    <button class="app running" aria-label="VS Code"><svg width="24" height="24" viewBox="0 0 24 24"><path d="M0 8l2-2 16 12v6L0 9z" fill="#0a70bc"/><path d="M0 16l18-16v7L2 18z" fill="#0f86d2"/><path d="M18 0l6 3v18l-6 3z" fill="#1f9cf0"/></svg></button>
    <button class="app" aria-label="Postman"><svg width="24" height="24" viewBox="0 0 24 24"><circle cx="12" cy="12" r="12" fill="#ff6c37"/><path d="M5 19l7-9 3.500 2.500z" fill="#fff"/><path d="M12 11l4-4M6 18l10-10" stroke="#fff" stroke-width="2"/><circle cx="17.500" cy="6.500" r="2.200" fill="#fff"/></svg></button>
    <button class="app" aria-label="Document"><svg width="18" height="24" viewBox="0 0 18 24"><path d="M1 1.500h11l5 5v16H1z" fill="#fafafa" stroke="#6a6a6a"/><path d="M12 1.500v5h5" fill="#ddd" stroke="#6a6a6a"/></svg></button>
    <button class="app" aria-label="Power BI"><svg width="24" height="24" viewBox="0 0 24 24"><path d="M13 0h8v24h-8z" fill="#dca20a"/><path d="M8 6h8v18H8z" fill="#f0c22a"/><path d="M3 12h8v12H3z" fill="#f8dc55"/></svg></button>
    <button class="app" aria-label="Terminal"><svg width="24" height="24" viewBox="0 0 24 24"><rect y="3" width="24" height="18" rx="1" fill="#404040"/><path d="M0 3h24v3H0z" fill="#7a7a7a"/><path d="M0 3h8v3H0z" fill="#ddd"/><path d="M3.500 8.500L8 13l-4.500 4.500" fill="none" stroke="#ccc" stroke-width="2.300"/><path d="M11 17.500h7" stroke="#fff" stroke-width="2"/></svg></button>
    <button class="app" aria-label="XAMPP"><svg width="24" height="24" viewBox="0 0 24 24"><rect width="24" height="24" rx="2" fill="#ee6f20"/><path d="M2 1h20v2H2z" fill="#f5a878"/><path d="M6 6.500c5-1.500 4 3 6 3s1-4.500 6-3c2 3-1.500 4-1.500 6s3.500 3 1.500 6c-5 1.500-4-3-6-3s-1 4.500-6 3c-2-3 1.500-4 1.500-6s-3.500-3-1.500-6z" fill="none" stroke="#fff" stroke-width="2.800"/></svg></button>
    <button class="app" aria-label="PostgreSQL"><svg width="24" height="24" viewBox="0 0 24 24"><path d="M1 8c-1-8 5-8 8-7 4-2 12-2 14 2 1 4-1 9-4 12l3 1c-1 2-3 2-5 2l-1 5c-2 2-4 0-4-2l-1-5c-2 1-5 2-6 0-2-2-4-5-4-8z" fill="#386a94" stroke="#a9c3d8" stroke-width="1.200"/><path d="M9 2C6 7 8 12 8 17M16 2c3 4 1 9 2 14M12 7v9" fill="none" stroke="#c9d9e6" stroke-width="1.200"/></svg></button>
    <button class="app" aria-label="PowerShell"><svg width="24" height="24" viewBox="0 0 24 24"><rect x=".5" y=".5" width="19" height="18" rx="3" fill="#1d5077" stroke="#9fb4c2"/><path d="M4 5l4 3-4 3" fill="none" stroke="#fff" stroke-width="1.600"/><path d="M9 11h5" stroke="#fff" stroke-width="1.500"/><circle cx="17" cy="17" r="5.300" fill="#1c1c1c" stroke="#2e9e3e" stroke-width="2.400"/></svg></button>
    <button class="app" aria-label="IntelliJ IDEA"><svg width="24" height="24" viewBox="0 0 24 24"><path d="M7 0h17v18l-7 6H0V9z" fill="url(#jb)"/><path d="M4 4h15v16H4z" fill="#000"/><text x="6" y="12" font-family="Liberation Mono" font-weight="700" font-size="8" fill="#fff">IJ</text><path d="M6 17.500h6" stroke="#fff" stroke-width="1.300"/></svg></button>
    <button class="app" aria-label="Telegram"><svg width="22" height="22" viewBox="4 4 16 16"><use href="#telegram" width="24" height="24"/></svg></button>
  </div>
  <div class="current">
    <button class="app on" aria-label="Brave"><svg width="24" height="26" viewBox="0 0 24 26"><use href="#brave" x="1" y="2" width="20" height="24"/><clipPath id="mini"><circle cx="17" cy="8" r="6"/></clipPath><g clip-path="url(#mini)"><path d="M10 1h14v14H10z" fill="#1b9a5a"/><path d="M9 12l11-11M15 15l9-9" stroke="#fff" stroke-width="2.400"/></g><circle cx="22" cy="2" r="2" fill="#999"/></svg></button>
    <button class="more" aria-label="More apps"><svg width="20" height="6" viewBox="0 0 20 6" fill="#fff"><circle cx="2.500" cy="3" r="2"/><circle cx="10" cy="3" r="2"/><circle cx="17.500" cy="3" r="2"/></svg></button>
  </div>
  <div class="tray">
    <button class="slot" aria-label="Hidden icons"><svg width="18" height="12" viewBox="0 0 18 12"><path d="M2 10l7-7 7 7" fill="none" stroke="#fff" stroke-width="2"/></svg></button>
    <button class="slot" aria-label="Updates"><svg width="26" height="26" viewBox="0 0 26 26" fill="none" stroke="#e8e8e8" stroke-width="1.500"><path d="M2 12A10.500 10.500 0 0 1 22 7M23 1v6h-6M3 24v-6h6M3 18a10.500 10.500 0 0 0 10 6"/><circle cx="19" cy="19" r="6" fill="#ff9d0a" stroke="none"/></svg></button>
    <button class="slot" aria-label="Cloud off"><svg width="26" height="26" viewBox="0 0 26 26"><path d="M6 21a5.500 5.500 0 0 1-1-11 8 8 0 0 1 15-1 6 6 0 0 1 1 12z" fill="#777"/><path d="M2 2l22 22" stroke="#1c1c1c" stroke-width="4"/><path d="M2 2l22 22" stroke="#ddd" stroke-width="1.600"/></svg></button>
    <button class="status" aria-label="Network, volume and battery">
      <svg width="24" height="24" viewBox="0 0 24 24" fill="none" stroke="#fff" stroke-width="1.800"><path d="M1 10c6-7.500 16-7.500 22 0M4.500 13.500c4.500-5 10.500-5 15 0M8 16.500c2.500-2.500 5.500-2.500 8 0"/><circle cx="12" cy="19" r="2" fill="#fff" stroke="none"/></svg>
      <svg width="24" height="24" viewBox="0 0 24 24" fill="none" stroke="#fff" stroke-width="1.600"><path d="M1 9h4l5-5v16l-5-5H1zM14 9q2 3 0 6M17 6q4 6 0 12M20 3q5.500 9 0 18"/></svg>
      <svg width="24" height="24" viewBox="0 0 24 24" fill="none" stroke="#fff" stroke-width="1.800"><path d="M11 6h8q2 0 2 2v8q0 2-2 2H8M21 10h2v4h-2"/><path d="M0 11C0 6 4 5 6 0c5 5 6 13 1 15H4l-2 4-1-1 1-3C1 14 0 13 0 11z" fill="#fff" stroke="none"/></svg>
    </button>
    <p class="clock">8:52 PM<br>10/29/2025</p>
  </div>
</footer>
</body>
</html>
```
FILE: styles.css
```css
* { box-sizing: border-box; }

body {
  margin: 0;
  min-height: 100vh;
  display: flex;
  flex-direction: column;
  background: #fff;
  color: #000;
  font-family: Inter, "Liberation Sans", sans-serif;
}

button {
  margin: 0;
  padding: 0;
  border: 0;
  background: none;
  font: inherit;
  color: inherit;
  display: flex;
  align-items: center;
  justify-content: center;
}

h1, h2, p { margin: 0; }
svg { display: block; flex: none; }
.sprite { width: 0; height: 0; }

/* Tab strip */
.tabstrip {
  display: flex;
  align-items: center;
  height: 60px;
  padding-left: 1px;
  background: #201e23;
}
.tabs { display: flex; min-width: 0; }
.tabs.pinned { flex: 0 0 312px; }
.tabs.open { flex: 1; margin-left: -2px; }
.tab {
  flex: 1;
  min-width: 0;
  height: 24px;
  border-right: 1px solid #3c3b40;
}
.tab.last { border-color: transparent; }
.fav { width: 24px; height: 24px; margin: 0 -3px; }
.pinned .fav { clip-path: inset(0 2px); }
.open .fav, .tab-end .fav { clip-path: inset(0 3px); }
.tab-active {
  width: 48px;
  height: 48px;
  margin: 0 2px;
  border-radius: 12px;
  background: #3b3a3f;
}
.tab-end { flex: 0 0 25px; }
.new-tab { width: 54px; height: 48px; }
.win-controls { display: flex; padding-left: 55px; }
.win-controls button { width: 69px; height: 60px; }

/* Toolbar */
.toolbar-wrap { background: #201e23; }
.toolbar {
  display: flex;
  align-items: center;
  height: 62px;
  padding-bottom: 2px;
  border-radius: 12px 12px 0 0;
  border-bottom: 1px solid #302e33;
  background: #3b3a3f;
}
.nav-left { display: flex; flex: 0 0 369px; padding-left: 10px; }
.tool { width: 45px; height: 48px; }
.bookmark { margin-left: 167px; }
.address {
  display: flex;
  align-items: center;
  flex: 1;
  height: 48px;
  padding: 0 5px 0 14px;
  border-radius: 12px;
  background: #252429;
}
.url {
  flex: 1;
  margin-left: 23px;
  font-family: "Open Sans", "Noto Sans", sans-serif;
  font-size: 20px;
  line-height: 28px;
  color: #e8e7ee;
}
.url span { color: #b4b3ba; }
.tool-wide { width: 51px; height: 48px; }
.rule { width: 2px; height: 24px; margin: 0 3px 0 -2px; background: #6a696e; }
.rule.dark { width: 3px; margin: 0 12px; background: #252429; }
.nav-right { display: flex; align-items: center; justify-content: flex-end; flex: 0 0 465px; padding-right: 11px; }

/* Admin page */
.page { flex: 1; display: grid; grid-template-columns: 307px 1fr; }
.ico {
  width: 29px;
  height: 29px;
  fill: none;
  stroke: currentColor;
  stroke-width: 2;
  stroke-linecap: round;
  stroke-linejoin: round;
}
.ico.small { width: 24px; height: 24px; }
.ico.tiny { width: 14px; height: 14px; }

.sidebar {
  display: flex;
  flex-direction: column;
  box-shadow: 0 12px 18px -4px rgba(0, 0, 0, .1), 0 5px 7px -5px rgba(0, 0, 0, .1);
}
.brand {
  height: 96px;
  border-bottom: 1px solid #e5e7eb;
  text-align: center;
  font-size: 36px;
  line-height: 94px;
  font-weight: 700;
}
.menu { flex: 1; }
.menu a {
  display: flex;
  align-items: center;
  gap: 14px;
  height: 72px;
  padding: 0 29px 2px;
  color: #4b5563;
  font-size: 22px;
  font-weight: 500;
  text-decoration: none;
}
.logout { padding: 29px; border-top: 1px solid #e5e7eb; }
.logout button {
  gap: 14px;
  height: 42px;
  padding-left: 9px;
  color: #ef4444;
  font-size: 22px;
  font-weight: 500;
}

.topbar {
  display: flex;
  align-items: center;
  justify-content: flex-end;
  gap: 28px;
  height: 96px;
  padding-right: 29px;
  box-shadow: 0 5px 7px -1px rgba(0, 0, 0, .1), 0 2px 5px -2px rgba(0, 0, 0, .1);
}
.who { display: flex; align-items: center; gap: 10px; font-size: 19px; font-weight: 600; }
.avatar {
  display: flex;
  align-items: center;
  justify-content: center;
  width: 48px;
  height: 48px;
  border-radius: 50%;
  color: #fff;
  font-family: "Liberation Sans", sans-serif;
  font-size: 24px;
  font-weight: 400;
}
.teal { background: #00897b; }
.orange { background: #fb8c00; }
.cyan { background: #00acc1; }

.content { padding: 58px; }
.heading {
  display: flex;
  align-items: center;
  justify-content: space-between;
  height: 48px;
  margin-bottom: 38px;
}
h1 { font-size: 43px; line-height: 48px; font-weight: 700; }
.count { display: flex; align-items: center; gap: 10px; padding: 0 19px 2px 0; font-size: 19px; font-weight: 600; }

.card {
  overflow: hidden;
  border-radius: 19px;
  background: #fff;
  box-shadow: 0 24px 30px -6px rgba(0, 0, 0, .1), 0 10px 12px -7px rgba(0, 0, 0, .1);
}
table { width: 100%; border-collapse: collapse; table-layout: fixed; }
.c-name { width: 26.1%; }
.c-email { width: 35.1%; }
.c-role { width: 21.1%; }
th, td { padding: 0 29px; text-align: left; }
th {
  height: 48px;
  background: #f9fafb;
  font-size: 14px;
  font-weight: 500;
  letter-spacing: 1px;
  text-transform: uppercase;
}
td { height: 88px; border-top: 1px solid #e5e7eb; }
.person { display: flex; align-items: center; gap: 14px; font-size: 19px; font-weight: 500; }
.email { font-size: 17px; }
.badge {
  display: flex;
  align-items: center;
  gap: 8px;
  height: 29px;
  padding-left: 14px;
  border-radius: 15px;
  font-size: 14px;
  font-weight: 500;
}
.admin { background: #dbeafe; color: #1d4ed8; }
.user { background: #f3f4f6; color: #374151; }
.delete { width: 43px; height: 43px; color: #ef4444; }

/* Taskbar */
.taskbar {
  display: flex;
  height: 72px;
  border-top: 2px solid #444;
  background: #1c1c1c;
  color: #fff;
}
.widget { position: relative; flex: 0 0 96px; height: 68px; }
.badge-count {
  position: absolute;
  left: 46px;
  top: 8px;
  width: 24px;
  height: 24px;
  border-radius: 50%;
  background: #ff99a4;
  color: #000;
  font-family: "Noto Sans", sans-serif;
  font-size: 16px;
  line-height: 24px;
}
.apps { display: flex; margin-left: 121px; }
.app { width: 48px; height: 68px; }
.running { background: radial-gradient(circle at 24px 60px, #9a9a9a 3px, transparent 4px); }
.current {
  display: flex;
  align-items: center;
  width: 104px;
  margin-left: 5px;
  padding-bottom: 2px;
  border: solid #a0a0a0;
  border-width: 0 2px;
}
.app.on {
  width: 42px;
  height: 60px;
  margin-left: 5px;
  border-radius: 6px;
  background: linear-gradient(#a0a0a0, #a0a0a0) 50% 100% / 16px 5px no-repeat #2b2b2b;
}
.more { flex: 1; height: 60px; }
.tray { display: flex; align-items: center; height: 68px; margin-left: auto; padding-right: 29px; }
.slot { width: 48px; height: 68px; }
.status { gap: 12px; width: 108px; height: 68px; margin-left: 6px; }
.clock {
  margin-left: 22px;
  text-align: right;
  font-family: "Noto Sans", sans-serif;
  font-size: 17px;
  line-height: 24px;
}
```
